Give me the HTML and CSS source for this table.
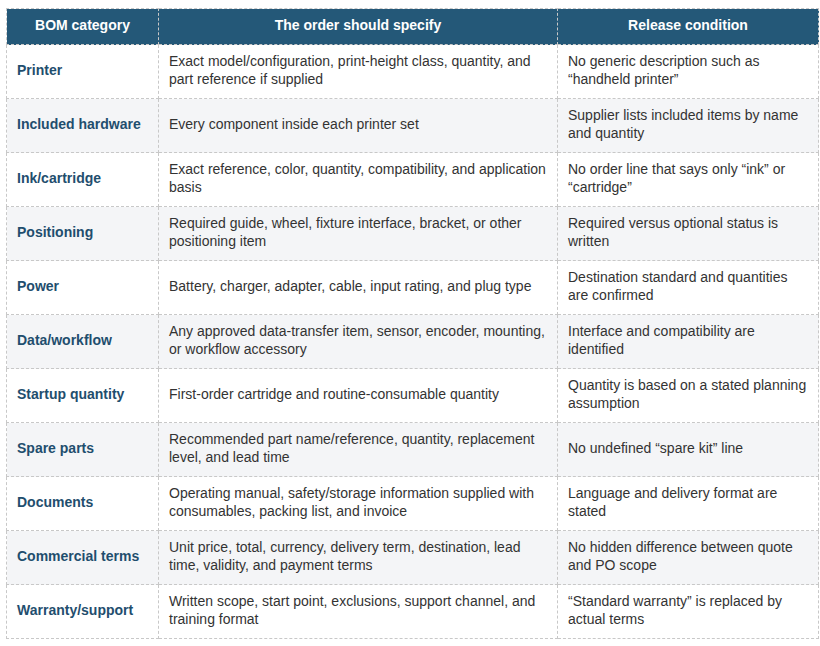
FILE: index.html
```html
<!DOCTYPE html>
<html>
<head>
<meta charset="utf-8">
<link rel="stylesheet" href="styles.css">
</head>
<body>
<table class="bom">
<colgroup><col class="c1"><col class="c2"><col class="c3"></colgroup>
<thead>
<tr><th>BOM category</th><th>The order should specify</th><th>Release condition</th></tr>
</thead>
<tbody>
<tr><td class="cat">Printer</td><td>Exact model/configuration, print-height class, quantity, and part reference if supplied</td><td>No generic description such as “handheld printer”</td></tr>
<tr><td class="cat">Included hardware</td><td>Every component inside each printer set</td><td>Supplier lists included items by name and quantity</td></tr>
<tr><td class="cat">Ink/cartridge</td><td>Exact reference, color, quantity, compatibility, and application basis</td><td>No order line that says only “ink” or “cartridge”</td></tr>
<tr><td class="cat">Positioning</td><td>Required guide, wheel, fixture interface, bracket, or other positioning item</td><td>Required versus optional status is written</td></tr>
<tr><td class="cat">Power</td><td>Battery, charger, adapter, cable, input rating, and plug type</td><td>Destination standard and quantities are confirmed</td></tr>
<tr><td class="cat">Data/workflow</td><td>Any approved data-transfer item, sensor, encoder, mounting, or workflow accessory</td><td>Interface and compatibility are identified</td></tr>
<tr><td class="cat">Startup quantity</td><td>First-order cartridge and routine-consumable quantity</td><td>Quantity is based on a stated planning assumption</td></tr>
<tr><td class="cat">Spare parts</td><td>Recommended part name/reference, quantity, replacement level, and lead time</td><td>No undefined “spare kit” line</td></tr>
<tr><td class="cat">Documents</td><td>Operating manual, safety/storage information supplied with consumables, packing list, and invoice</td><td>Language and delivery format are stated</td></tr>
<tr><td class="cat">Commercial terms</td><td>Unit price, total, currency, delivery term, destination, lead time, validity, and payment terms</td><td>No hidden difference between quote and PO scope</td></tr>
<tr><td class="cat">Warranty/support</td><td>Written scope, start point, exclusions, support channel, and training format</td><td>“Standard warranty” is replaced by actual terms</td></tr>
</tbody>
</table>
</body>
</html>
```
FILE: styles.css
```css
html, body {
  margin: 0;
  padding: 0;
  background: #ffffff;
}
body {
  padding: 8px 0 0 6px;
  font-family: "Liberation Sans", Arial, sans-serif;
  font-size: 14px;
  line-height: 18px;
  color: #333333;
}
.bom {
  border-collapse: collapse;
  table-layout: fixed;
  width: 812px;
}
.c1 { width: 152px; }
.c2 { width: 399px; }
.c3 { width: 261px; }
.bom th, .bom td {
  border: 1px dashed #c8c8c8;
  padding: 0 10px 4px 10px;
  text-align: left;
  vertical-align: middle;
}
.bom th {
  background: #245878;
  color: #ffffff;
  font-weight: bold;
  text-align: center;
  height: 31px;
}
.bom td {
  height: 49px;
}
.bom tbody tr:nth-child(even) td {
  background: #f4f5f7;
}
.bom td.cat {
  font-weight: bold;
  color: #1f4e6e;
}
```
